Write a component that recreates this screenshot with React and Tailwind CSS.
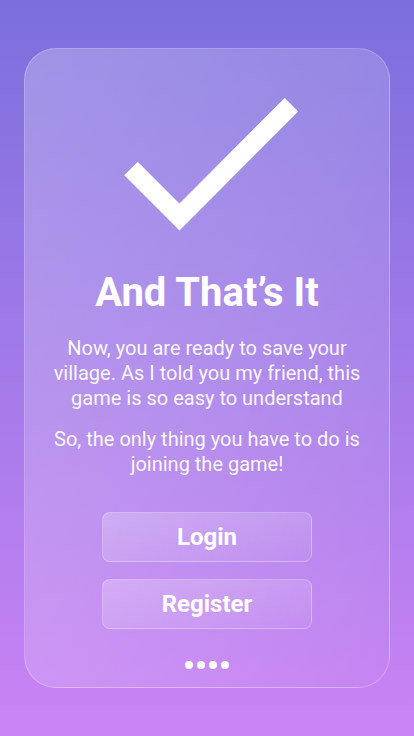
const Dots = () => (
  <div className="flex gap-1">
    {[0, 1, 2, 3].map((i) => (
      <span key={i} className="block w-2 h-2 rounded-full bg-white" />
    ))}
  </div>
);

const App = () => {
  return (
    <div
      className="min-h-screen w-full bg-gradient-to-b from-[#7b6fdd] to-[#ca83f4] px-6 py-12"
      style={{ fontFamily: "Roboto, 'Liberation Sans', sans-serif" }}
    >
      <div className="h-[640px] rounded-[32px] border border-white/25 bg-gradient-to-tl from-white/[0.03] via-white/[0.16] to-white/25 flex flex-col items-center pt-[48px]">
        <svg width="180" height="136" viewBox="0 0 180 136" fill="none" className="ml-[4px]">
          <polyline
            points="12,71.5 60.5,120 172.5,7.7"
            stroke="#ffffff"
            strokeWidth="19"
            strokeLinejoin="miter"
            strokeLinecap="butt"
          />
        </svg>

        <h1 className="mt-[36px] text-[40px] leading-[48px] font-bold text-white">And That’s It</h1>

        <p className="mt-[19px] px-6 text-center text-[20px] leading-[25px] text-white/95">
          Now, you are ready to save your village. As I told you my friend, this game is so easy to understand
        </p>
        <p className="mt-4 px-6 text-center text-[20px] leading-[25px] text-white/95">
          So, the only thing you have to do is joining the game!
        </p>

        <div className="mt-[35px] flex flex-col gap-[17px]">
          <button className="w-[210px] h-[50px] rounded-lg border border-white/25 bg-gradient-to-br from-white/25 to-white/5 text-white text-[24px] font-bold">
            Login
          </button>
          <button className="w-[210px] h-[50px] rounded-lg border border-white/25 bg-gradient-to-br from-white/25 to-white/5 text-white text-[24px] font-bold">
            Register
          </button>
        </div>

        <div className="mt-[32px]">
          <Dots />
        </div>
      </div>
    </div>
  );
};

export default App;
